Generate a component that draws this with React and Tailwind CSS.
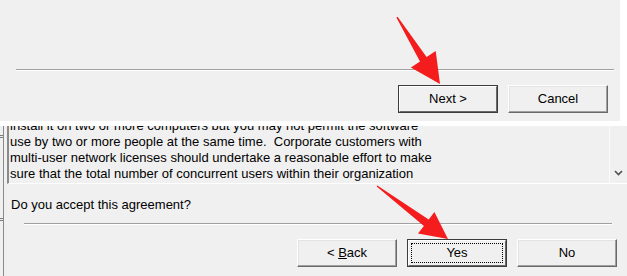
import React from "react";

const btnBase =
  "h-[28px] w-[100px] bg-[#f0f0f0] text-[13px] text-black flex items-center justify-center border border-t-white border-l-white border-r-[#696969] border-b-[#696969] shadow-[inset_-1px_-1px_0_#a0a0a0,inset_1px_1px_0_#e3e3e3]";

const Button = ({ children, isDefault, focused }) => (
  <div
    className={
      isDefault
        ? "h-[28px] w-[100px] border border-[#3c3c3c] bg-[#f0f0f0] flex"
        : btnBase
    }
  >
    {isDefault ? (
      <div className="flex-1 flex border border-t-white border-l-white border-r-[#696969] border-b-[#696969] p-[2px]">
        <div
          className={
            "flex-1 flex items-center justify-center text-[13px] text-black " +
            (focused ? "border border-dotted border-black" : "")
          }
        >
          {children}
        </div>
      </div>
    ) : (
      children
    )}
  </div>
);

const Separator = ({ className }) => (
  <div className={"h-[2px] border-t border-[#a0a0a0] border-b border-b-white " + className}></div>
);

const Arrow = ({ points }) => (
  <polygon points={points} fill="#f41c1c" />
);

export default function App() {
  return (
    <div
      className="relative w-[627px] h-[276px] bg-white overflow-hidden flex flex-col"
      style={{ fontFamily: '"Liberation Sans", Arial, sans-serif' }}
    >
      {/* top dialog */}
      <div className="w-[620px] h-[121px] bg-[#f0f0f0] flex flex-col shrink-0">
        <Separator className="mt-[69px] ml-[16px] w-[598px]" />
        <div className="flex gap-[10px] mt-[14px] ml-[398px]">
          <Button isDefault>Next &gt;</Button>
          <Button>Cancel</Button>
        </div>
      </div>

      <div className="h-[5px] shrink-0"></div>

      {/* lower dialog */}
      <div className="flex-1 bg-[#f0f0f0] flex">
        <div className="w-[3px] flex flex-col">
          <div className="mt-[9px] h-[3px] border-y border-[#7a7a7a]"></div>
          <div className="mt-[80px] h-[3px] border-y border-[#7a7a7a]"></div>
        </div>
        <div className="w-px bg-[#8a8a8a]"></div>
        <div className="flex-1 flex flex-col">
          <div className="ml-[3px] h-[58px] flex border-l-2 border-l-[#8a8a8a] border-b border-b-white">
            <div className="flex-1 overflow-hidden text-[13px] leading-[16px] text-black pl-[1px]">
              <div className="mt-[-8px] whitespace-pre">
                {"install it on two or more computers but you may not permit the software\n" +
                  "use by two or more people at the same time.  Corporate customers with\n" +
                  "multi-user network licenses should undertake a reasonable effort to make\n" +
                  "sure that the total number of concurrent users within their organization"}
              </div>
            </div>
            <div className="w-[18px] border-l border-[#fbfbfb] flex flex-col justify-end items-center pb-[7px]">
              <svg width="9" height="6" viewBox="0 0 9 6">
                <path d="M1 1 L4.5 4.5 L8 1" stroke="#505050" strokeWidth="1.6" fill="none" />
              </svg>
            </div>
          </div>
          <div className="mt-[12px] ml-[7px] text-[13px] leading-[17px] text-black">
            Do you accept this agreement?
          </div>
          <Separator className="mt-[10px] ml-[20px] w-[588px]" />
          <div className="flex gap-[10px] mt-[14px] ml-[293px]">
            <Button>
              <span>
                &lt; <span className="underline">B</span>ack
              </span>
            </Button>
            <Button isDefault focused>
              Yes
            </Button>
            <Button>No</Button>
          </div>
        </div>
      </div>

      {/* red annotation arrows */}
      <svg className="absolute inset-0 pointer-events-none" width="627" height="276">
        <Arrow points="396.4,17.6 420,61.4 410.9,67.5 440,84 435.7,50.9 426.6,57 397.6,16.8" />
        <Arrow points="376.7,186.4 423.9,226 418,233.4 448,239 434.4,212 428.7,219.6 377.3,185.6" />
      </svg>
    </div>
  );
}
